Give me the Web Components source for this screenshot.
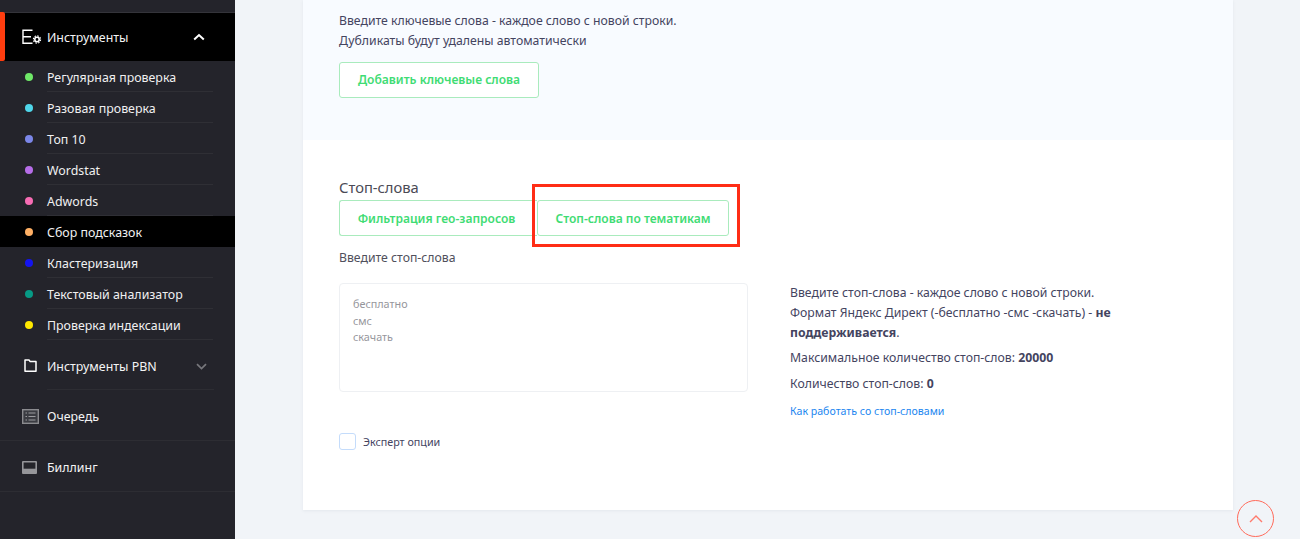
<!DOCTYPE html>
<html lang="ru">
<head>
<meta charset="utf-8">
<title>Стоп-слова</title>
<style>
  html, body { margin: 0; height: 539px; overflow: hidden; }
  body { font-family: "Noto Sans", "Liberation Sans", sans-serif; background: #f1f4f8; display: flex; }
</style>
</head>
<body>
<side-bar>
  <nav-group label="Инструменты" icon="tools" open></nav-group>
  <nav-sub color="#6fe868">Регулярная проверка</nav-sub>
  <nav-sub color="#4fd6ea">Разовая проверка</nav-sub>
  <nav-sub color="#7b86e8">Топ 10</nav-sub>
  <nav-sub color="#b66de8">Wordstat</nav-sub>
  <nav-sub color="#f76cb4">Adwords</nav-sub>
  <nav-sub color="#ffb065" active>Сбор подсказок</nav-sub>
  <nav-sub color="#1414f0">Кластеризация</nav-sub>
  <nav-sub color="#069a85">Текстовый анализатор</nav-sub>
  <nav-sub color="#ffe800">Проверка индексации</nav-sub>
  <nav-group label="Инструменты PBN" icon="folder"></nav-group>
  <nav-group label="Очередь" icon="queue" plain></nav-group>
  <nav-group label="Биллинг" icon="billing" plain></nav-group>
</side-bar>
<main-area>
  <form-card>
    <key-section></key-section>
    <stop-section></stop-section>
  </form-card>
</main-area>
<to-top></to-top>

<script>
const ICONS = {
  tools: `<svg width="20" height="16" viewBox="0 0 20 16" fill="none" stroke="#fff" stroke-width="1.4"><path d="M10.5 1.2H1v13h9.5M1 7.7h8"/><circle cx="15" cy="10.5" r="2.2" stroke-width="1.6"/><circle cx="15" cy="10.5" r="3.6" stroke-width="1.1" stroke-dasharray="1.6 1.2"/></svg>`,
  folder: `<svg width="20" height="14" viewBox="0 0 20 14" fill="none" stroke="#fff" stroke-width="1.5"><path d="M3 2.2V1h4l1.2 1.6H14v9.6H3z" stroke-linejoin="round"/></svg>`,
  queue: `<svg width="17" height="15" viewBox="0 0 17 15"><rect x=".7" y=".7" width="15.6" height="13.6" fill="#3b3c42" stroke="#8b8b8f" stroke-width="1.4"/><path d="M3.5 4h1.5M6.5 4h7M3.5 7.5h1.5M6.5 7.5h7M3.5 11h1.5M6.5 11h7" stroke="#9b9b9f" stroke-width="1.1"/></svg>`,
  billing: `<svg width="15" height="13" viewBox="0 0 15 13"><rect width="15" height="13" rx="1" fill="#96969a"/><rect x="1.6" y="1.5" width="11.8" height="6.2" fill="#25252b"/></svg>`
};
const CHEV_UP = `<svg width="12" height="8" viewBox="0 0 12 8" fill="none" stroke="#fff" stroke-width="2"><path d="M1.2 6.5 6 2l4.8 4.5"/></svg>`;
const CHEV_DOWN = `<svg width="11" height="7" viewBox="0 0 11 7" fill="none" stroke="#77777c" stroke-width="1.7"><path d="M1 1.2 5.5 5.6 10 1.2"/></svg>`;

class SideBar extends HTMLElement {
  constructor() {
    super();
    this.attachShadow({ mode: "open" }).innerHTML = `<style>
      :host { display: flex; flex-direction: column; width: 235px; flex: none; height: 539px; background: #24242b; color: #fff; padding-top: 12px; box-sizing: border-box; }
    </style><slot></slot>`;
  }
}

class NavGroup extends HTMLElement {
  connectedCallback() {
    const open = this.hasAttribute("open");
    const plain = this.hasAttribute("plain");
    const icon = ICONS[this.getAttribute("icon")];
    const chev = plain ? "" : open ? CHEV_UP : CHEV_DOWN;
    this.attachShadow({ mode: "open" }).innerHTML = `<style>
      :host { display: block; position: relative; }
      .row { display: flex; align-items: center; height: ${open ? 49 : 50}px; box-sizing: border-box; padding: 0 28px 0 22px; }
      :host([open]) .row { background: #000; border-top: 1px solid #34343a; padding-right: 30px; }
      :host([open]) .row::before { content: ""; position: absolute; left: 0; top: 0; bottom: 0; width: 5px; background: #ff3d0f; border-radius: 0 2px 2px 0; }
      :host([plain]) .row { height: 51px; padding-top: 3px; border-bottom: 1px solid #2d2d33; }
      :host([icon="folder"]) .row { padding-top: 2px; }
      :host([icon="folder"]) .row::after { content: ""; position: absolute; left: 47px; right: 21px; bottom: 0; height: 1px; background: #2d2d33; }
      .icon { width: 25px; display: flex; align-items: center; }
      .label { flex: 1; font-size: 12.4px; color: #f4f4f5; }
      .chev { display: flex; }
    </style><div class="row"><span class="icon">${icon}</span><span class="label">${this.getAttribute("label")}</span><span class="chev">${chev}</span></div>`;
  }
}

class NavSub extends HTMLElement {
  connectedCallback() {
    this.attachShadow({ mode: "open" }).innerHTML = `<style>
      :host { display: block; }
      :host([active]) .row { background: #000; }
      :host([active]) .text { border-color: transparent; }
      .row { display: flex; align-items: stretch; height: 31px; padding-left: 25px; }
      .dot { width: 8px; height: 8px; border-radius: 50%; background: ${this.getAttribute("color")}; align-self: center; margin-right: 14px; flex: none; }
      .text { flex: 1; margin-right: 22px; padding-top: 2px; display: flex; align-items: center; border-bottom: 1px solid #2f2f35; color: #f0f0f1; font-size: 12.4px; box-sizing: border-box; }
    </style><div class="row"><span class="dot"></span><span class="text"><slot></slot></span></div>`;
  }
}

class MainArea extends HTMLElement {
  constructor() {
    super();
    this.attachShadow({ mode: "open" }).innerHTML = `<style>
      :host { display: block; flex: 1; padding: 0 67px 0 68px; }
    </style><slot></slot>`;
  }
}

class FormCard extends HTMLElement {
  constructor() {
    super();
    this.attachShadow({ mode: "open" }).innerHTML = `<style>
      :host { display: block; background: #fff; height: 510px; box-shadow: 0 1px 3px rgba(120,130,150,.1); }
    </style><slot></slot>`;
  }
}

class GreenButton extends HTMLElement {
  constructor() {
    super();
    this.attachShadow({ mode: "open" }).innerHTML = `<style>
      :host { display: inline-flex; align-items: center; justify-content: center; box-sizing: border-box; height: 36px; background: #fff; border: 1px solid #a9ebbd; border-radius: 3px; color: #3fdc74; font-size: 12.05px; font-weight: 600; white-space: nowrap; }
    </style><slot></slot>`;
  }
}

class KeySection extends HTMLElement {
  constructor() {
    super();
    this.attachShadow({ mode: "open" }).innerHTML = `<style>
      :host { display: block; height: 140px; box-sizing: border-box; background: #f8fbff; padding: 11px 36px 0; color: #44445f; font-size: 12.25px; line-height: 20px; }
      p { margin: 0 0 11px; }
      green-button { width: 200px; }
    </style><p>Введите ключевые слова - каждое слово с новой строки.<br>Дубликаты будут удалены автоматически</p>
    <green-button>Добавить ключевые слова</green-button>`;
  }
}

class StopSection extends HTMLElement {
  constructor() {
    super();
    this.attachShadow({ mode: "open" }).innerHTML = `<style>
      :host { display: block; padding: 37px 36px 0; color: #44445f; font-size: 12.25px; }
      h3 { margin: 0; font-size: 14.75px; font-weight: 400; line-height: 20px; color: #4a4a55; }
      .tabs { display: flex; position: relative; margin-top: 3px; }
      .geo { width: 198px; padding-right: 4px; border-right: 0; border-radius: 3px 0 0 3px; }
      .topic { width: 192px; }
      .mark { position: absolute; left: 193px; top: -16px; width: 208px; height: 63px; box-sizing: border-box; border: 3px solid #ff2d16; }
      .hint { margin: 13px 0 16px; line-height: 18px; color: #50505c; }
      .cols { display: grid; grid-template-columns: 409px 1fr; column-gap: 42px; }
      .area { height: 109px; box-sizing: border-box; border: 1px solid #eef0f3; border-radius: 4px; padding: 12px 13px; font-size: 10.8px; line-height: 16.5px; color: #96969c; }
      .info { line-height: 20px; max-width: 330px; }
      .info p { margin: 0 0 6px; }
      .info p:first-child { margin-bottom: 5px; }
      b { font-weight: 700; }
      a { color: #1b86f0; font-size: 10.6px; text-decoration: none; line-height: 18px; display: block; margin-top: 8px; }
      .check { display: flex; align-items: center; gap: 7px; margin-top: 41px; font-size: 10.75px; color: #44445f; }
      .box { width: 15px; height: 15px; border: 1px solid #c4dcfb; border-radius: 3px; background: #fff; }
    </style>
    <h3>Стоп-слова</h3>
    <div class="tabs">
      <green-button class="geo">Фильтрация гео-запросов</green-button>
      <green-button class="topic">Стоп-слова по тематикам</green-button>
      <span class="mark"></span>
    </div>
    <div class="hint">Введите стоп-слова</div>
    <div class="cols">
      <div>
        <div class="area">бесплатно<br>смс<br>скачать</div>
        <label class="check"><span class="box"></span>Эксперт опции</label>
      </div>
      <div class="info">
        <p>Введите стоп-слова - каждое слово с новой строки.<br>Формат Яндекс Директ (-бесплатно -смс -скачать) - <b>не</b><br><b>поддерживается</b>.</p>
        <p>Максимальное количество стоп-слов: <b>20000</b></p>
        <p>Количество стоп-слов: <b>0</b></p>
        <a>Как работать со стоп-словами</a>
      </div>
    </div>`;
  }
}

class ToTop extends HTMLElement {
  constructor() {
    super();
    this.attachShadow({ mode: "open" }).innerHTML = `<style>
      :host { position: fixed; left: 1237px; top: 500px; width: 37px; height: 37px; box-sizing: border-box; border: 1.5px solid #ff6a5a; border-radius: 50%; display: flex; align-items: center; justify-content: center; }
    </style><svg width="14" height="8" viewBox="0 0 14 8" fill="none" stroke="#ff7a6c" stroke-width="1.4"><path d="M1 7 7 1l6 6"/></svg>`;
  }
}

customElements.define("side-bar", SideBar);
customElements.define("nav-group", NavGroup);
customElements.define("nav-sub", NavSub);
customElements.define("main-area", MainArea);
customElements.define("form-card", FormCard);
customElements.define("green-button", GreenButton);
customElements.define("key-section", KeySection);
customElements.define("stop-section", StopSection);
customElements.define("to-top", ToTop);
</script>
</body>
</html>
